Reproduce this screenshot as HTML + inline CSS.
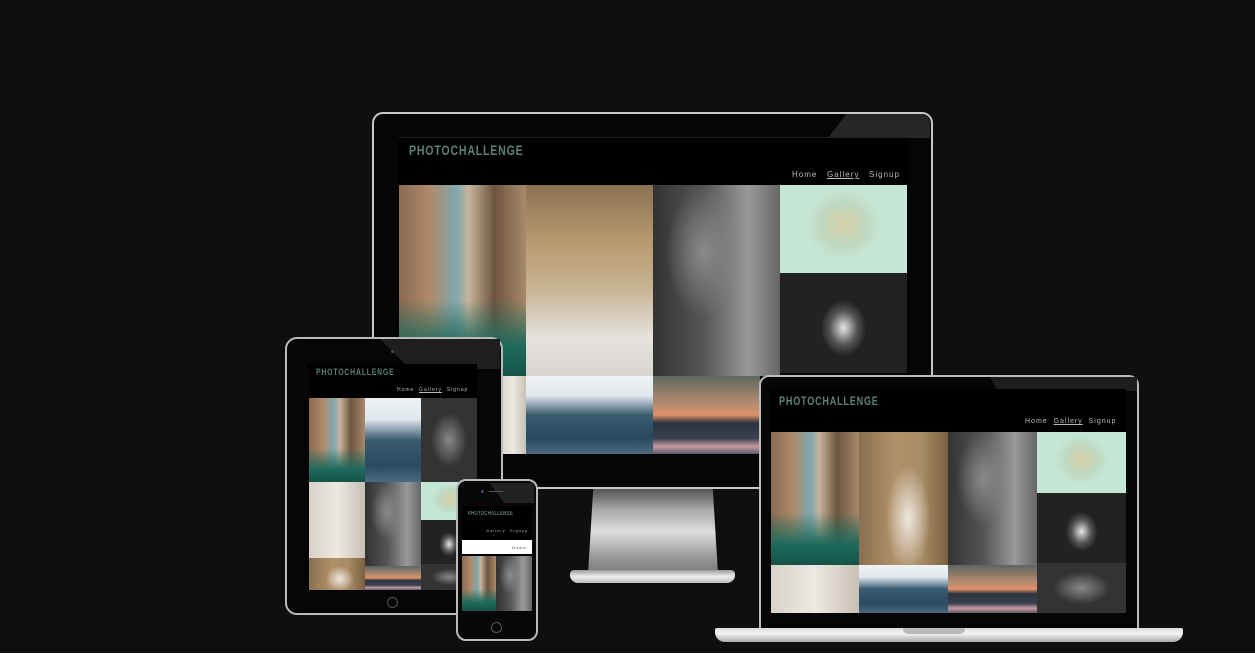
<!DOCTYPE html>
<html><head><meta charset="utf-8"><style>
*{margin:0;padding:0;box-sizing:border-box}
body{width:1255px;height:655px;background:#100f10;position:relative;overflow:hidden;font-family:"Liberation Sans",sans-serif}
.a{position:absolute}
.t{position:absolute;color:#5b8470;font-weight:bold;white-space:nowrap;transform-origin:0 0;letter-spacing:1px}
.n{position:absolute;color:#bbb;white-space:nowrap;letter-spacing:1px}
.venice2{background:linear-gradient(180deg,rgba(0,0,0,0) 60%,#1d6a5c 85%,#165248 100%),linear-gradient(90deg,#8a6a52 0%,#b08a6a 25%,#7fa8b0 45%,#c8b49a 55%,#6d5440 75%,#a88a6a 100%)}
.alley{background:linear-gradient(180deg,#8a7252 0%,#b89a70 30%,#c8b494 55%,#e6e2dc 80%,#d8d4d0 100%)}
.alley2{background:radial-gradient(ellipse 25% 40% at 55% 65%,#eee8e0,rgba(0,0,0,0)),linear-gradient(90deg,#8a7050,#b09068 40%,#a88c66 70%,#7a6040)}
.girl{background:radial-gradient(ellipse 30% 35% at 40% 35%,#8a8a8a,rgba(0,0,0,0)),linear-gradient(90deg,#333 0%,#555 40%,#999 75%,#666 100%)}
.seal{background:radial-gradient(ellipse 30% 40% at 50% 45%,#d8d2a8,#c0d8c0 60%,#c4e6d4)}
.bear{background:radial-gradient(ellipse 18% 28% at 50% 55%,#e6e6e6,#555 60%,#222 100%)}
.fall{background:linear-gradient(180deg,#eef2f4 0%,#dfe8ee 25%,#3a5c70 50%,#2a4a5e 80%,#4a6a80 100%)}
.sea{background:linear-gradient(180deg,#5c6660 0%,#b48a70 35%,#e0906a 50%,#2c3440 60%,#3a4050 80%,#c89aa0 90%,#5a5a6a 100%)}
.lady{background:linear-gradient(90deg,#d8d2c8,#ece8e2 50%,#c8c0b4)}
.bw{background:radial-gradient(ellipse 40% 40% at 50% 50%,#888,#333 80%)}
</style></head><body>

<!-- monitor -->
<div class="a" style="left:372px;top:112px;width:561px;height:377px;border-radius:11px;background:#050505;border:2px solid #c8c8c8"></div>
<div class="a" style="left:828px;top:114px;width:102px;height:24px;background:#262626;clip-path:polygon(18% 0,100% 0,100% 100%,0 100%);border-radius:0 9px 0 0"></div>
<div class="a" style="left:399px;top:137px;width:509px;height:318px;background:#000;border-top:1px solid #222"></div>
<div class="t" style="left:409px;top:142px;font-size:14px;transform:scaleX(.76)">PHOTOCHALLENGE</div>
<div class="n" style="left:792px;top:170px;font-size:8px">Home &nbsp;&nbsp;<u>Gallery</u> &nbsp;&nbsp;Signup</div>
<div class="a venice2" style="left:399px;top:185px;width:127px;height:191px"></div>
<div class="a alley" style="left:526px;top:185px;width:127px;height:191px"></div>
<div class="a girl" style="left:653px;top:185px;width:127px;height:191px"></div>
<div class="a seal" style="left:780px;top:185px;width:127px;height:88px"></div>
<div class="a bear" style="left:780px;top:273px;width:127px;height:100px"></div>
<div class="a lady" style="left:500px;top:376px;width:26px;height:78px"></div>
<div class="a fall" style="left:526px;top:376px;width:127px;height:78px"></div>
<div class="a sea" style="left:653px;top:376px;width:107px;height:78px"></div>
<!-- stand -->
<div class="a" style="left:588px;top:489px;width:130px;height:85px;background:linear-gradient(180deg,#555 0%,#aaa 25%,#ddd 50%,#999 80%,#777);clip-path:polygon(4% 0,96% 0,100% 100%,0 100%)"></div>
<div class="a" style="left:570px;top:570px;width:165px;height:13px;border-radius:4px 4px 8px 8px;background:linear-gradient(180deg,#999,#eee 50%,#bbb)"></div>

<!-- tablet -->
<div class="a" style="left:285px;top:337px;width:218px;height:278px;border-radius:12px;background:#060606;border:2px solid #bbb"></div>
<div class="a" style="left:380px;top:339px;width:120px;height:30px;background:#1e1e1e;clip-path:polygon(0 0,100% 0,100% 100%,25% 100%)"></div>
<div class="a" style="left:391px;top:350px;width:3px;height:3px;border-radius:50%;background:#446"></div>
<div class="a" style="left:309px;top:364px;width:168px;height:226px;background:#000"></div>
<div class="t" style="left:316px;top:367px;font-size:9px;transform:scaleX(.77)">PHOTOCHALLENGE</div>
<div class="n" style="left:397px;top:387px;font-size:5px">Home &nbsp;<u>Gallery</u> &nbsp;Signup</div>
<div class="a venice2" style="left:309px;top:398px;width:56px;height:84px"></div>
<div class="a fall" style="left:365px;top:398px;width:56px;height:84px"></div>
<div class="a bw" style="left:421px;top:398px;width:56px;height:84px"></div>
<div class="a lady" style="left:309px;top:482px;width:56px;height:76px"></div>
<div class="a girl" style="left:365px;top:482px;width:56px;height:84px"></div>
<div class="a seal" style="left:421px;top:482px;width:56px;height:38px"></div>
<div class="a bear" style="left:421px;top:520px;width:56px;height:44px"></div>
<div class="a alley2" style="left:309px;top:558px;width:56px;height:32px"></div>
<div class="a sea" style="left:365px;top:566px;width:56px;height:24px"></div>
<div class="a bw" style="left:421px;top:564px;width:56px;height:26px"></div>
<div class="a" style="left:387px;top:597px;width:11px;height:11px;border-radius:50%;border:1px solid #555"></div>

<!-- phone -->
<div class="a" style="left:456px;top:479px;width:82px;height:162px;border-radius:10px;background:#080808;border:2px solid #bbb"></div>
<div class="a" style="left:460px;top:483px;width:74px;height:20px;background:#222;clip-path:polygon(40% 0,100% 0,100% 100%,60% 100%)"></div>
<div class="a" style="left:481px;top:490px;width:3px;height:3px;border-radius:50%;background:#446"></div>
<div class="a" style="left:489px;top:491px;width:14px;height:1px;background:#555"></div>
<div class="a" style="left:462px;top:506px;width:70px;height:106px;background:#000"></div>
<div class="t" style="left:468px;top:511px;font-size:6px;transform:scaleX(.72);letter-spacing:.3px">PHOTOCHALLENGE</div>
<div class="n" style="left:486px;top:528px;font-size:4px">Gallery &nbsp;Signup</div>
<div class="a" style="left:462px;top:540px;width:70px;height:14px;background:#fff"></div>
<div class="n" style="left:512px;top:545px;font-size:4px;color:#444">Home</div>
<div class="a venice2" style="left:462px;top:556px;width:34px;height:55px"></div>
<div class="a girl" style="left:496px;top:556px;width:36px;height:55px"></div>
<div class="a" style="left:491px;top:622px;width:11px;height:11px;border-radius:50%;border:1px solid #555"></div>

<!-- laptop -->
<div class="a" style="left:759px;top:375px;width:380px;height:254px;border-radius:10px 10px 0 0;background:#050505;border:2px solid #bbb;border-bottom:none"></div>
<div class="a" style="left:990px;top:377px;width:147px;height:14px;background:#1e1e1e;clip-path:polygon(0 0,100% 0,100% 100%,5% 100%)"></div>
<div class="a" style="left:771px;top:389px;width:355px;height:224px;background:#000"></div>
<div class="t" style="left:779px;top:394px;font-size:12px;transform:scaleX(.76)">PHOTOCHALLENGE</div>
<div class="n" style="left:1025px;top:418px;font-size:7px">Home &nbsp;<u>Gallery</u> &nbsp;Signup</div>
<div class="a venice2" style="left:771px;top:432px;width:88px;height:133px"></div>
<div class="a alley2" style="left:859px;top:432px;width:89px;height:133px"></div>
<div class="a girl" style="left:948px;top:432px;width:89px;height:133px"></div>
<div class="a seal" style="left:1037px;top:432px;width:89px;height:61px"></div>
<div class="a bear" style="left:1037px;top:493px;width:89px;height:70px"></div>
<div class="a lady" style="left:771px;top:565px;width:88px;height:48px"></div>
<div class="a fall" style="left:859px;top:565px;width:89px;height:48px"></div>
<div class="a sea" style="left:948px;top:565px;width:89px;height:48px"></div>
<div class="a bw" style="left:1037px;top:563px;width:89px;height:50px"></div>
<div class="a" style="left:715px;top:628px;width:468px;height:14px;border-radius:2px 2px 10px 10px;background:linear-gradient(180deg,#ddd,#f4f4f4 40%,#aaa)"></div>
<div class="a" style="left:903px;top:628px;width:62px;height:6px;border-radius:0 0 5px 5px;background:#bbb"></div>

<div class="a" style="left:0;top:653px;width:1255px;height:2px;background:#fff"></div>
</body></html>
